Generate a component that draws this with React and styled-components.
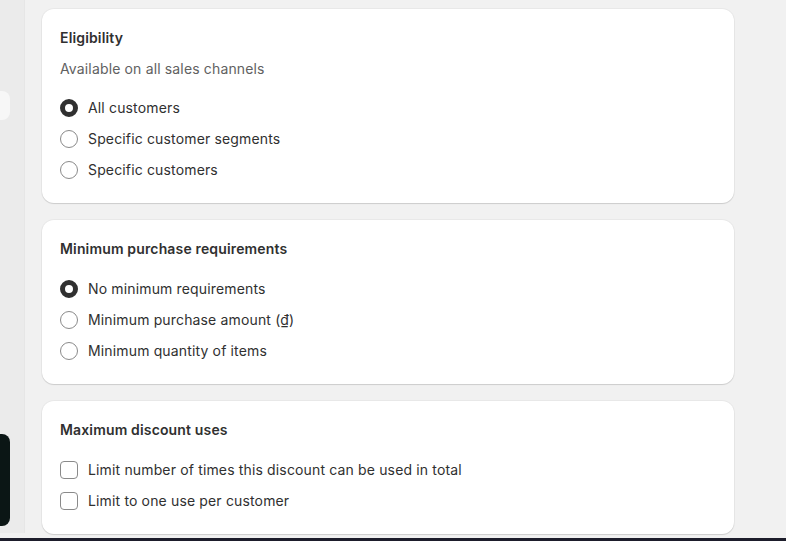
import React from 'react'
import styled, { createGlobalStyle } from 'styled-components'

const Global = createGlobalStyle`
  html, body { margin: 0; padding: 0; }
  body {
    background: #f1f1f1;
    font-family: Inter, "Noto Sans", sans-serif;
    color: #303030;
    -webkit-font-smoothing: antialiased;
  }
`

const Page = styled.div`
  height: 541px;
  display: flex;
  flex-direction: column;
  overflow: hidden;
`

const Body = styled.div`
  flex: 1;
  display: flex;
  min-height: 0;
`

const Rail = styled.aside`
  width: 24px;
  flex-shrink: 0;
  background: #ebebeb;
  border-right: 1px solid #e6e6e6;
  display: flex;
  flex-direction: column;
  padding-top: 91px;
`

const RailChip = styled.div`
  width: 10px;
  height: ${p => p.h}px;
  margin-top: ${p => p.mt || 0}px;
  background: ${p => p.dark ? '#0b1615' : '#f7f7f7'};
  border-radius: 0 8px 8px 0;
`

const Main = styled.main`
  flex: 1;
  padding: 9px 52px 0 17px;
  display: flex;
  flex-direction: column;
  gap: 17px;
`

const Card = styled.section`
  background: #fff;
  border-radius: 12px;
  padding: 19px 18px 23px;
  box-shadow: 0 1px 1px rgba(0,0,0,0.12), 0 0 0 1px rgba(0,0,0,0.035);
`

const Title = styled.h2`
  margin: 0;
  font-size: 14px;
  line-height: 20px;
  font-weight: 600;
  color: #303030;
  letter-spacing: 0.15px;
`

const Sub = styled.p`
  margin: 11px 0 0;
  font-size: 14px;
  line-height: 20px;
  color: #616161;
  letter-spacing: 0.15px;
`

const Options = styled.div`
  display: flex;
  flex-direction: column;
  gap: 11px;
  margin-top: ${p => p.mt}px;
`

const Option = styled.label`
  display: flex;
  align-items: center;
  gap: 10px;
  height: 20px;
  font-size: 14px;
  line-height: 20px;
  color: #303030;
  letter-spacing: 0.15px;
`

const Radio = styled.span`
  width: 18px;
  height: 18px;
  box-sizing: border-box;
  border-radius: 50%;
  flex-shrink: 0;
  background: #fff;
  border: ${p => p.on ? '5px solid #303030' : '1px solid #8a8a8a'};
`

const Check = styled.span`
  width: 18px;
  height: 18px;
  box-sizing: border-box;
  border-radius: 4px;
  flex-shrink: 0;
  background: #fff;
  border: 1px solid #8a8a8a;
`

const BottomBar = styled.div`
  height: 3px;
  margin-top: 5px;
  background: #1d1d2b;
`

const RadioGroup = ({ items, selected, mt }) => (
  <Options mt={mt}>
    {items.map((t, i) => (
      <Option key={t}>
        <Radio on={i === selected} />
        {t}
      </Option>
    ))}
  </Options>
)

export default function App() {
  return (
    <Page>
      <Global />
      <Body>
        <Rail>
          <RailChip h={29} />
          <RailChip dark h={92} mt={314} />
        </Rail>
        <Main>
          <Card>
            <Title>Eligibility</Title>
            <Sub>Available on all sales channels</Sub>
            <RadioGroup
              mt={19}
              selected={0}
              items={['All customers', 'Specific customer segments', 'Specific customers']}
            />
          </Card>
          <Card>
            <Title>Minimum purchase requirements</Title>
            <RadioGroup
              mt={20}
              selected={0}
              items={['No minimum requirements', 'Minimum purchase amount (₫)', 'Minimum quantity of items']}
            />
          </Card>
          <Card>
            <Title>Maximum discount uses</Title>
            <Options mt={20}>
              <Option><Check />Limit number of times this discount can be used in total</Option>
              <Option><Check />Limit to one use per customer</Option>
            </Options>
          </Card>
        </Main>
      </Body>
      <BottomBar />
    </Page>
  )
}
